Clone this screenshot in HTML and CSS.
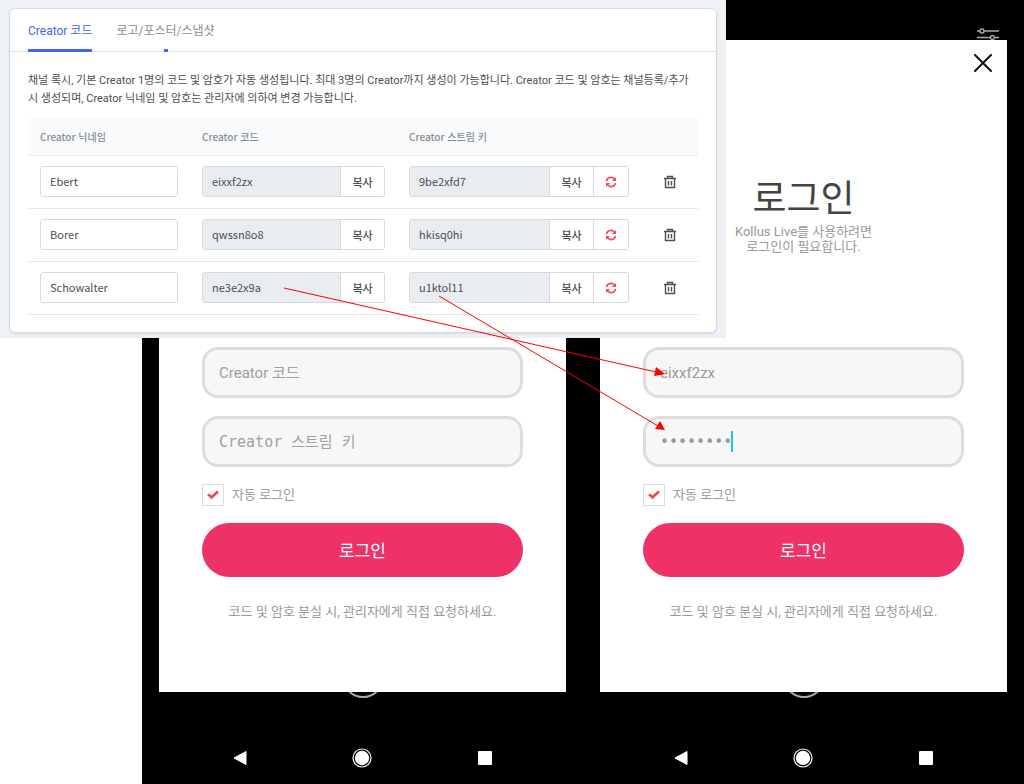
FILE: index.html
```html
<!DOCTYPE html>
<html lang="ko">
<head>
    <meta charset="UTF-8">
    <meta name="viewport" content="width=device-width, initial-scale=1.0">
    <title>Kollus Live - Creator 로그인</title>
    <link rel="stylesheet" href="styles.css">
</head>
<body>
    <svg class="sprite" aria-hidden="true">
        <symbol id="icon-refresh" viewBox="0 0 12 12">
            <path d="M1.5 5.2A4.4 4.4 0 0 1 9.4 3.2M10.5 6.8A4.4 4.4 0 0 1 2.6 8.8" fill="none" stroke="currentColor" stroke-width="1.6"/>
            <path d="M11 1v4H7zM1 11V7h4z" fill="currentColor"/>
        </symbol>
        <symbol id="icon-trash" viewBox="0 0 14 14">
            <path d="M1 3.5h12M4.5 3.5v-2h5v2M2.5 3.5v9h9v-9M5.5 6v4.5M8.5 6v4.5" fill="none" stroke="currentColor" stroke-width="1.4"/>
        </symbol>
        <symbol id="icon-back" viewBox="0 0 14 16">
            <path d="M13 1.5v13L1 8z" fill="#fff" stroke="#fff" stroke-linejoin="round"/>
        </symbol>
        <symbol id="icon-home" viewBox="0 0 20 20">
            <circle cx="10" cy="10" r="9" fill="none" stroke="#fff" stroke-width="1.2"/>
            <circle cx="10" cy="10" r="7.2" fill="#fff"/>
        </symbol>
        <symbol id="icon-recent" viewBox="0 0 14 14">
            <rect width="14" height="14" rx="1" fill="#fff"/>
        </symbol>
        <symbol id="icon-shutter" viewBox="0 0 44 6">
            <circle cx="22" cy="-15" r="20" fill="none" stroke="#aaa" stroke-width="2"/>
        </symbol>
    </svg>

    <div class="stage">
        <div class="phone">
            <div class="status-bar"></div>
            <div class="modal">
                <form class="login-form">
                    <input class="field" type="text" placeholder="Creator 코드" aria-label="Creator 코드">
                    <input class="field field-key" type="password" placeholder="Creator 스트림 키" aria-label="Creator 스트림 키">
                    <label class="auto-login"><input type="checkbox" checked> 자동 로그인</label>
                    <button class="login-button" type="button">로그인</button>
                    <p class="login-help">코드 및 암호 분실 시, 관리자에게 직접 요청하세요.</p>
                </form>
            </div>
            <svg class="shutter" aria-hidden="true"><use href="#icon-shutter"/></svg>
            <nav class="nav-bar">
                <button type="button" aria-label="뒤로"><svg width="14" height="16"><use href="#icon-back"/></svg></button>
                <button type="button" aria-label="홈"><svg width="20" height="20"><use href="#icon-home"/></svg></button>
                <button type="button" aria-label="최근 앱"><svg width="14" height="14"><use href="#icon-recent"/></svg></button>
            </nav>
        </div>

        <div class="phone">
            <div class="status-bar">
                <svg width="24" height="12" viewBox="0 0 24 12" fill="none" stroke="#aaa" stroke-width="1.4" aria-hidden="true">
                    <path d="M1 3h3M8 3h15M1 9.500h13M19 9.500h4"/>
                    <circle cx="6" cy="3" r="2"/>
                    <circle cx="16.500" cy="9.500" r="2"/>
                </svg>
            </div>
            <div class="modal">
                <button class="close-button" type="button" aria-label="닫기">
                    <svg width="18" height="18" viewBox="0 0 18 18" fill="none" stroke="#111" stroke-width="2" stroke-linecap="round"><path d="M1 1l16 16M17 1L1 17"/></svg>
                </button>
                <header class="login-header">
                    <h1>로그인</h1>
                    <p>Kollus Live를 사용하려면<br>로그인이 필요합니다.</p>
                </header>
                <form class="login-form">
                    <input class="field" type="text" value="eixxf2zx" aria-label="Creator 코드">
                    <div class="key-wrap">
                        <input class="field field-key" type="password" value="u1ktol11" aria-label="Creator 스트림 키">
                        <span class="caret"></span>
                    </div>
                    <label class="auto-login"><input type="checkbox" checked> 자동 로그인</label>
                    <button class="login-button" type="button">로그인</button>
                    <p class="login-help">코드 및 암호 분실 시, 관리자에게 직접 요청하세요.</p>
                </form>
            </div>
            <svg class="shutter" aria-hidden="true"><use href="#icon-shutter"/></svg>
            <nav class="nav-bar">
                <button type="button" aria-label="뒤로"><svg width="14" height="16"><use href="#icon-back"/></svg></button>
                <button type="button" aria-label="홈"><svg width="20" height="20"><use href="#icon-home"/></svg></button>
                <button type="button" aria-label="최근 앱"><svg width="14" height="14"><use href="#icon-recent"/></svg></button>
            </nav>
        </div>

        <section class="admin">
            <div class="card">
                <nav class="tabs">
                    <a class="tab active" href="#code">Creator 코드</a>
                    <a class="tab" href="#media">로고/포스터/스냅샷</a>
                </nav>
                <div class="card-body">
                    <p class="guide">채널 록시, 기본 Creator 1명의 코드 및 암호가 자동 생성됩니다. 최대 3명의 Creator까지 생성이 가능합니다. Creator 코드 및 암호는 채널등록/추가<br>시 생성되며, Creator 닉네임 및 암호는 관리자에 의하여 변경 가능합니다.</p>
                    <table class="creators">
                        <colgroup>
                            <col class="col-name">
                            <col class="col-code">
                            <col class="col-key">
                            <col>
                        </colgroup>
                        <thead>
                            <tr>
                                <th>Creator 닉네임</th>
                                <th>Creator 코드</th>
                                <th>Creator 스트림 키</th>
                                <th></th>
                            </tr>
                        </thead>
                        <tbody>
                            <tr>
                                <td><div class="group"><input type="text" value="Ebert" aria-label="닉네임"></div></td>
                                <td><div class="group"><input type="text" value="eixxf2zx" readonly aria-label="코드"><button type="button">복사</button></div></td>
                                <td><div class="group"><input type="text" value="9be2xfd7" readonly aria-label="스트림 키"><button type="button">복사</button><button class="refresh" type="button" aria-label="재생성"><svg width="12" height="12"><use href="#icon-refresh"/></svg></button></div></td>
                                <td><button class="trash" type="button" aria-label="삭제"><svg width="14" height="14"><use href="#icon-trash"/></svg></button></td>
                            </tr>
                            <tr>
                                <td><div class="group"><input type="text" value="Borer" aria-label="닉네임"></div></td>
                                <td><div class="group"><input type="text" value="qwssn8o8" readonly aria-label="코드"><button type="button">복사</button></div></td>
                                <td><div class="group"><input type="text" value="hkisq0hi" readonly aria-label="스트림 키"><button type="button">복사</button><button class="refresh" type="button" aria-label="재생성"><svg width="12" height="12"><use href="#icon-refresh"/></svg></button></div></td>
                                <td><button class="trash" type="button" aria-label="삭제"><svg width="14" height="14"><use href="#icon-trash"/></svg></button></td>
                            </tr>
                            <tr>
                                <td><div class="group"><input type="text" value="Schowalter" aria-label="닉네임"></div></td>
                                <td><div class="group"><input type="text" value="ne3e2x9a" readonly aria-label="코드"><button type="button">복사</button></div></td>
                                <td><div class="group"><input type="text" value="u1ktol11" readonly aria-label="스트림 키"><button type="button">복사</button><button class="refresh" type="button" aria-label="재생성"><svg width="12" height="12"><use href="#icon-refresh"/></svg></button></div></td>
                                <td><button class="trash" type="button" aria-label="삭제"><svg width="14" height="14"><use href="#icon-trash"/></svg></button></td>
                            </tr>
                        </tbody>
                    </table>
                </div>
            </div>
        </section>

        <!-- arrows from the issued code and key to the login fields -->
        <svg class="arrows" viewBox="0 0 1024 784" aria-hidden="true">
            <path d="M284 288L656 372M439 296L658 426" fill="none" stroke="#f00"/>
            <path d="M665 374l-9-7-2 9zM665 430l-10-1 5-8z" fill="#f00"/>
        </svg>
    </div>
</body>
</html>
```

FILE: styles.css
```css
* {
    box-sizing: border-box;
}

body {
    margin: 0;
    background: #fff;
    font-family: Roboto, "Noto Sans CJK KR", sans-serif;
    color: #999;
}

input, button {
    font-family: inherit;
    margin: 0;
}

button {
    padding: 0;
    border: 0;
    background: none;
    cursor: pointer;
}

svg {
    display: block;
}

.sprite {
    position: absolute;
    width: 0;
    height: 0;
}

.stage {
    position: relative;
    display: grid;
    grid-template-columns: 1fr 1fr;
    min-height: 100vh;
    padding-left: 142px;
}

/* phones */
.phone {
    display: flex;
    flex-direction: column;
    padding: 0 17px;
    background: #000;
}

.status-bar {
    display: flex;
    justify-content: flex-end;
    align-items: flex-end;
    height: 40px;
    padding-right: 7px;
}

.modal {
    display: flex;
    flex-direction: column;
    min-height: 652px;
    padding: 14px 43px 70px;
    background: #fff;
}

.close-button {
    align-self: flex-end;
    margin-right: -28px;
}

.login-header {
    margin-top: 104px;
    text-align: center;
}

.login-header h1 {
    margin: 0;
    font-size: 37px;
    font-weight: 400;
    line-height: 48px;
    color: #444;
}

.login-header p {
    margin: 0;
    font-size: 13px;
    line-height: 15px;
}

.login-form {
    display: flex;
    flex-direction: column;
    margin-top: auto;
}

.field {
    display: block;
    width: 100%;
    height: 51px;
    margin-bottom: 18px;
    padding: 1px 14px 0;
    border: 3px solid #ddd;
    border-radius: 16px;
    background: #f7f7f7;
    color: #999;
    font-size: 15px;
}

.field::placeholder {
    color: #a0a0a0;
}

.field-key {
    margin-bottom: 17px;
    font-family: "DejaVu Sans Mono", "Noto Sans CJK KR", monospace;
}

.key-wrap {
    position: relative;
}

.caret {
    position: absolute;
    left: 88px;
    top: 15px;
    width: 2px;
    height: 21px;
    background: #1cc4f4;
}

.auto-login {
    display: flex;
    align-items: center;
    gap: 8px;
    height: 22px;
    margin-bottom: 17px;
    font-size: 13px;
    line-height: 20px;
}

.auto-login input {
    display: grid;
    place-items: center;
    width: 22px;
    height: 22px;
    border: 1px solid #ddd;
    background: #fff;
    appearance: none;
}

.auto-login input:checked::before {
    content: "";
    width: 12px;
    height: 10px;
    background: #f04848;
    clip-path: polygon(0 50%, 17% 34%, 38% 56%, 83% 6%, 100% 22%, 38% 92%);
}

.login-button {
    height: 54px;
    padding-bottom: 2px;
    border-radius: 27px;
    background: #ee3268;
    color: #fff;
    font-size: 17px;
}

.login-help {
    margin: 24px 0 0;
    text-align: center;
    font-size: 13px;
    line-height: 21px;
}

.shutter {
    width: 44px;
    height: 6px;
    margin: 0 auto;
}

.nav-bar {
    display: grid;
    grid-template-columns: repeat(3, 1fr);
    margin: 50px 20px 16px;
}

.nav-bar button {
    display: grid;
    place-items: center;
    height: 20px;
}

/* admin window on top of the phones */
.admin {
    position: absolute;
    top: 0;
    left: 0;
    width: calc(100% - 298px);
    padding: 8px 9px 5px;
    background: #eef2f6;
    color: #495057;
}

.card {
    border: 1px solid #d6dbe2;
    border-radius: 6px;
    background: #fff;
    box-shadow: 0 1px 2px rgba(0, 0, 0, 0.1);
}

.tabs {
    display: flex;
    gap: 24px;
    padding: 0 18px;
    border-bottom: 1px solid #dfe2e6;
}

.tab {
    position: relative;
    height: 42px;
    color: #868e96;
    font-size: 12px;
    line-height: 44px;
    text-decoration: none;
}

.tab::after {
    content: "";
    position: absolute;
    left: 50%;
    bottom: -1px;
    width: 4px;
    height: 3px;
    margin-left: -2px;
    background: #4466ee;
}

.tab.active {
    color: #4466ee;
}

.tab.active::after {
    left: 0;
    width: 100%;
    margin-left: 0;
}

.card-body {
    padding: 20px 18px 17px;
}

.guide {
    margin: 0 0 10px;
    font-size: 11px;
    line-height: 18px;
    white-space: nowrap;
}

.creators {
    width: 100%;
    border-collapse: collapse;
    table-layout: fixed;
    font-family: "Noto Sans CJK KR", sans-serif;
}

.col-name {
    width: 162px;
}

.col-code {
    width: 207px;
}

.col-key {
    width: 244px;
}

.creators th {
    height: 37px;
    padding: 0 12px;
    border-bottom: 1px solid #e6ebee;
    background: #f8fafb;
    color: #868e96;
    font-size: 10px;
    font-weight: 500;
    text-align: left;
}

.creators td {
    height: 53px;
    padding: 0 12px;
    border-bottom: 1px solid #e6e8ec;
}

.group {
    display: flex;
    height: 31px;
    border: 1px solid #d5d8e2;
    border-radius: 3px;
    overflow: hidden;
}

.group input {
    flex: 1;
    min-width: 0;
    padding: 0 9px 2px;
    border: 0;
    background: #fff;
    color: #495057;
    font-size: 11px;
}

.group input[readonly] {
    background: #e9edf0;
}

.group button {
    width: 44px;
    border-left: 1px solid #d5d8e2;
    background: #fff;
    color: #495057;
    font-size: 11px;
    font-weight: 500;
}

.group .refresh {
    display: grid;
    place-items: center;
    width: 35px;
    color: #fa4654;
}

.trash {
    display: block;
    margin: 0 auto;
    color: #495057;
}

.arrows {
    position: absolute;
    top: 0;
    left: 0;
    width: 100%;
    pointer-events: none;
}
```
